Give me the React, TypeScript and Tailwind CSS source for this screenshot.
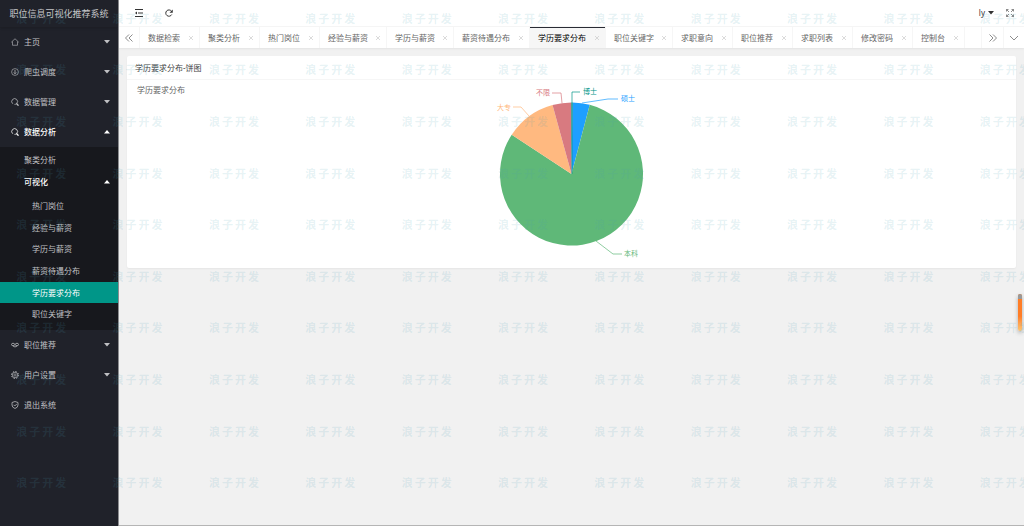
import type { ReactNode } from "react";

type Tab = {
  title: string;
  width: string;
  active?: boolean;
};

const tabs: Tab[] = [
  { title: "数据检索", width: "w-[60px]" },
  { title: "聚类分析", width: "w-[60px]" },
  { title: "热门岗位", width: "w-[60px]" },
  { title: "经验与薪资", width: "w-[67px]" },
  { title: "学历与薪资", width: "w-[67px]" },
  { title: "薪资待遇分布", width: "w-[76px]" },
  { title: "学历要求分布", width: "w-[76px]", active: true },
  { title: "职位关键字", width: "w-[67px]" },
  { title: "求职意向", width: "w-[60px]" },
  { title: "职位推荐", width: "w-[60px]" },
  { title: "求职列表", width: "w-[60px]" },
  { title: "修改密码", width: "w-[60px]" },
  { title: "控制台", width: "w-[52px]" },
];

const visualPages = ["热门岗位", "经验与薪资", "学历与薪资", "薪资待遇分布", "学历要求分布", "职位关键字"];

// angles in degrees, clockwise from the top
const slices = [
  { name: "硕士", from: 0.8, to: 14.8, color: "#1E9FFF", line: "582,103 608,99 618,99", x: 621, y: 101 },
  { name: "本科", from: 14.8, to: 303.3, color: "#5FB878", line: "596,241 613,254 622,254", x: 624, y: 256 },
  { name: "大专", from: 303.3, to: 344.6, color: "#FFB980", line: "529,116 521,107 513,107", x: 497, y: 110 },
  { name: "不限", from: 344.6, to: 360, color: "#D87A80", line: "562,103 561,93 552,93", x: 536, y: 95 },
  { name: "博士", from: 0, to: 0.8, color: "#009688", line: "572,174 572,92 580,92", x: 583, y: 94 },
];

function slicePath(from: number, to: number) {
  const cx = 571.5;
  const cy = 174;
  const r = 71.5;
  const point = (deg: number) => {
    const a = (deg * Math.PI) / 180;
    return `${cx + r * Math.sin(a)} ${cy - r * Math.cos(a)}`;
  };
  return `M${cx} ${cy}L${point(from)}A${r} ${r} 0 ${to - from > 180 ? 1 : 0} 1 ${point(to)}Z`;
}

function Icon({ children }: { children: ReactNode }) {
  return (
    <svg
      viewBox="0 0 16 16"
      className="size-2 shrink-0"
      fill="none"
      stroke="currentColor"
      strokeWidth="1.5"
      aria-hidden="true"
    >
      {children}
    </svg>
  );
}

const searchIcon = (
  <Icon>
    <path d="M3.500 11.500A5.800 5.800 0 1 1 11.500 11Q9.500 13 7 12.800" />
    <path d="M11 11l4 4.500" strokeWidth="2.4" />
  </Icon>
);

function Caret({ up }: { up?: boolean }) {
  return (
    <svg viewBox="0 0 6 4" className="h-1 w-1.5 shrink-0" fill="currentColor" aria-hidden="true">
      <path d={up ? "M0 3.500L3 0L6 3.500Z" : "M0 0L3 3.500L6 0Z"} />
    </svg>
  );
}

function MenuItem({ icon, label, open, leaf }: { icon: ReactNode; label: string; open?: boolean; leaf?: boolean }) {
  return (
    <a
      href="#"
      className={`flex h-[30px] items-center gap-[5px] pr-2 pl-[11px] ${open ? "font-medium text-white" : "text-[#c0c1c4]"}`}
    >
      {icon}
      <span className="flex-1">{label}</span>
      {!leaf && <Caret up={open} />}
    </a>
  );
}

function Sidebar() {
  return (
    <aside className="w-[119px] shrink-0 border-r border-[#8c8d90] bg-[#20222a]">
      <h1 className="flex h-[27px] items-center justify-center text-[9px] whitespace-nowrap text-[#c4c5c8] shadow-sm">
        职位信息可视化推荐系统
      </h1>
      <nav>
        <MenuItem
          label="主页"
          icon={
            <Icon>
              <path d="M.5 8.500L8 1.500l7.500 7M3 7v7.500h10V7" strokeWidth="1.2" />
            </Icon>
          }
        />
        <MenuItem
          label="爬虫调度"
          icon={
            <Icon>
              <circle cx="8" cy="8" r="6.800" strokeWidth="1.2" />
              <path d="M8 4v7M5.500 9L8 11.500 10.500 9" />
            </Icon>
          }
        />
        <MenuItem label="数据管理" icon={searchIcon} />
        <MenuItem label="数据分析" icon={searchIcon} open />
        <div className="bg-[#17181d] pt-0.5 pb-[5px] text-[#c0c1c4]">
          <a href="#" className="flex h-[22px] items-center pl-6">
            聚类分析
          </a>
          <a href="#" className="flex h-[22px] items-center justify-between pr-2 pl-6 font-medium text-white">
            可视化
            <Caret up />
          </a>
          <ul className="mt-0.5 flex h-[130px] flex-col">
            {visualPages.map((page) => (
              <li key={page} className="flex-1">
                <a
                  href="#"
                  className={`flex h-full items-center pl-8 ${page === "学历要求分布" ? "bg-[#009688] text-white" : ""}`}
                >
                  {page}
                </a>
              </li>
            ))}
          </ul>
        </div>
        <MenuItem
          label="职位推荐"
          icon={
            <Icon>
              <path d="M1 7q0-2.500 3-2.500T8 7q1-2.500 4-2.500T15 7q0 2.500-3 2.500T8 7Q7 9.500 4 9.500T1 7ZM4 10q4 4 8 0" />
            </Icon>
          }
        />
        <MenuItem
          label="用户设置"
          icon={
            <Icon>
              <circle cx="8" cy="8" r="2.300" strokeWidth="1.2" />
              <circle cx="8" cy="8" r="5.400" strokeWidth="1.2" />
              <circle cx="8" cy="8" r="6.900" strokeWidth="2" strokeDasharray="2.700 2.720" />
            </Icon>
          }
        />
        <MenuItem
          label="退出系统"
          leaf
          icon={
            <Icon>
              <path d="M8 1l6 2v5q0 5-6 7q-6-2-6-7V3ZM5 7.500l2.500 2.500L11.500 6" />
            </Icon>
          }
        />
      </nav>
    </aside>
  );
}

function TopBar() {
  return (
    <header className="flex h-[27px] items-center border-b border-[#f6f6f6] bg-white text-[#333]">
      <button type="button" aria-label="侧边伸缩" className="ml-4">
        <svg viewBox="0 0 8 8" className="size-2" fill="none" stroke="currentColor" aria-hidden="true">
          <path d="M0 .5h8M3 4h5M0 7.500h8" />
          <path d="M0 4l2-1.500v3Z" fill="currentColor" stroke="none" />
        </svg>
      </button>
      <button type="button" aria-label="刷新" className="ml-[22px]">
        <Icon>
          <path d="M13.500 11A6.300 6.300 0 1 1 13 4.500" strokeWidth="2" />
          <path d="M15.500 1v6.500H9Z" fill="currentColor" stroke="none" />
        </Icon>
      </button>
      <div className="flex-1" />
      <button type="button" className="flex items-center gap-[3px]">
        ly
        <Caret />
      </button>
      <button type="button" aria-label="全屏" className="mr-[10px] ml-3 text-[#666]">
        <Icon>
          <path d="M1 5V1h4M11 1h4v4M15 11v4h-4M5 15H1v-4M1 1l5 5M15 1l-5 5M15 15l-5-5M1 15l5-5" />
        </Icon>
      </button>
    </header>
  );
}

function TabBar() {
  return (
    <div className="flex h-[21px] bg-white text-[#666] shadow-[0_1px_2px_rgba(0,0,0,0.06)]">
      <button type="button" aria-label="向左" className="flex w-[21px] shrink-0 items-center justify-center border-r border-[#f6f6f6]">
        <Icon>
          <path d="M8 1L1 8l7 7M15 1L8 8l7 7" />
        </Icon>
      </button>
      <div className="flex min-w-0 flex-1 overflow-hidden">
        {tabs.map((tab) => (
          <div
            key={tab.title}
            className={`flex shrink-0 items-center justify-between border-r border-[#f6f6f6] pr-1.5 pl-2 ${tab.width} ${
              tab.active ? "bg-[#f6f6f6] text-black shadow-[inset_0_1px_0_#292b34]" : ""
            }`}
          >
            <a href="#">{tab.title}</a>
            <button type="button" aria-label={`关闭${tab.title}`} className="text-[#c2c2c2]">
              <svg viewBox="0 0 4 4" className="size-1" fill="none" stroke="currentColor" strokeWidth="0.6" aria-hidden="true">
                <path d="M0 0l4 4M4 0L0 4" />
              </svg>
            </button>
          </div>
        ))}
      </div>
      <button type="button" aria-label="向右" className="flex w-[22px] shrink-0 items-center justify-center border-l border-[#f6f6f6]">
        <Icon>
          <path d="M1 1l7 7-7 7M8 1l7 7-7 7" />
        </Icon>
      </button>
      <button type="button" aria-label="标签操作" className="flex w-[21px] shrink-0 items-center justify-center border-l border-[#f6f6f6]">
        <Icon>
          <path d="M0 4l8 8 8-8" />
        </Icon>
      </button>
    </div>
  );
}

function ChartCard() {
  return (
    <section className="m-2 rounded-xs bg-white shadow-[0_1px_2px_rgba(0,0,0,0.05)]">
      <h2 className="flex h-6 items-center border-b border-[#f6f6f6] px-2 text-[#444]">学历要求分布-饼图</h2>
      <div className="grid grid-cols-[1fr_180px_1fr]">
        <h3 className="pt-1 pl-2.5 text-[#666]">学历要求分布</h3>
        <svg viewBox="482 80 180 188" className="h-[188px] w-[180px]" role="img" aria-label="学历要求分布">
          {slices.map((s) => (
            <g key={s.name}>
              <path d={slicePath(s.from, s.to)} fill={s.color} />
              <polyline points={s.line} fill="none" stroke={s.color} strokeWidth="0.7" />
              <text x={s.x} y={s.y} fill={s.color} className="text-[7px]">
                {s.name}
              </text>
            </g>
          ))}
        </svg>
      </div>
    </section>
  );
}

function Watermark() {
  return (
    <div className="pointer-events-none absolute inset-0 overflow-hidden" aria-hidden="true">
      <div className="absolute -top-[7px] -right-[29px] bottom-[17px] -left-[7px] grid grid-cols-11 grid-rows-10 text-[11px] font-bold text-[#4a9fb5]/15">
        {Array.from({ length: 110 }, (_, i) => (
          <div key={i} className="flex items-center justify-center gap-0.5">
            <span>浪</span>
            <span>子</span>
            <span>开</span>
            <span>发</span>
          </div>
        ))}
      </div>
    </div>
  );
}

export default function App() {
  return (
    <div className="relative flex min-h-screen bg-[#f1f1f1] font-['Noto_Sans','Noto_Sans_CJK_SC',sans-serif] text-[8px] leading-3">
      <Sidebar />
      <main className="min-w-0 flex-1 border-b border-[#b5b5b5]">
        <TopBar />
        <TabBar />
        <ChartCard />
      </main>
      <div className="absolute top-[294px] right-0.5 h-[37px] w-1 overflow-hidden rounded-full bg-linear-to-b from-[#ff7d26] from-60% to-[#ffc56e] shadow-[0_2px_4px_rgba(0,0,0,0.3)]">
        <div className="h-[5px] bg-[#999]" />
      </div>
      <Watermark />
    </div>
  );
}
